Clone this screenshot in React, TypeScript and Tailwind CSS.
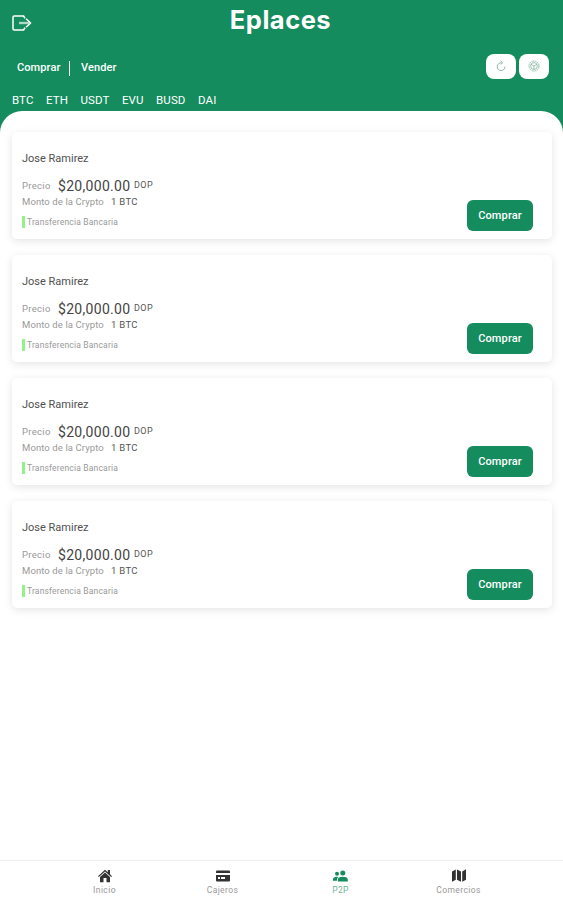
import React from 'react';

const coins = ['BTC', 'ETH', 'USDT', 'EVU', 'BUSD', 'DAI'];

const offers = [1, 2, 3, 4].map((id) => ({
  id,
  name: 'Jose Ramirez',
  price: '$20,000.00',
  currency: 'DOP',
  amount: '1 BTC',
  method: 'Transferencia Bancaria',
}));

function ExitIcon() {
  return (
    <svg width="20" height="16" viewBox="0 0 20 16" fill="none" stroke="currentColor" strokeWidth="1.5" strokeLinejoin="round">
      <path d="M13 3.4L11.6 1H2.2Q1 1 1 2.2V13.8Q1 15 2.2 15H11.6L13 12.6" />
      <path d="M7 8H17" strokeWidth="2.4" strokeOpacity="0.65" />
      <path d="M14 3.8L18.6 8L14 12.2" />
    </svg>
  );
}

function RefreshIcon() {
  return (
    <svg width="12" height="12" viewBox="0 0 12 12" fill="none" stroke="currentColor" strokeWidth="0.8">
      <path d="M6.5 2.8A3.9 3.9 0 1 0 10 6.6" />
      <path d="M5.6 0.8L7.6 2.7L5.8 4.5" />
    </svg>
  );
}

function FilterIcon() {
  return (
    <svg width="12" height="12" viewBox="0 0 12 12" fill="none" stroke="currentColor" strokeWidth="0.7">
      <circle cx="6" cy="6" r="5" strokeDasharray="2.1 0.5" />
      <circle cx="6" cy="6" r="3.4" />
      <path d="M3.2 4.4L6 6L8.8 4.4M6 6V9.2" />
    </svg>
  );
}

function HomeIcon() {
  return (
    <svg width="14" height="14" viewBox="0 0 14 14" fill="currentColor">
      <path d="M0 7.2L7 0.8L9.8 3.3V1H12V5.3L14 7.2L13.2 8L7 2.5L0.8 8Z" />
      <path d="M2 8L7 3.6L12 8V13.3H8.5V9H5.5V13.3H2Z" />
    </svg>
  );
}

function CardIcon() {
  return (
    <svg width="14" height="12" viewBox="0 0 14 12" fill="currentColor">
      <path d="M0 1.5Q0 .5 1 .5H13Q14 .5 14 1.5V3H0Z" />
      <path fillRule="evenodd" d="M0 5H14V10.5Q14 11.5 13 11.5H1Q0 11.5 0 10.5ZM2 7V9H4V7ZM5 7V9H9V7Z" />
    </svg>
  );
}

function PeopleIcon() {
  return (
    <svg width="15" height="12" viewBox="0 0 15 12" fill="currentColor">
      <circle cx="4" cy="3.7" r="2" />
      <circle cx="9.8" cy="3" r="2.5" />
      <path d="M0 10.8V9.3Q0 6.8 4 6.8Q4.8 6.8 5.4 7Q4 8 4 9.6V10.8Z" />
      <path d="M4.8 11.5V9.8Q4.8 6.8 9.8 6.8Q14.8 6.8 14.8 9.8V11.5Z" />
    </svg>
  );
}

function MapIcon() {
  return (
    <svg width="14" height="13" viewBox="0 0 14 13" fill="currentColor">
      <path d="M0 2.6L3.8 0.5V10.8L0 12.8Z" />
      <path d="M5 0.5L9 2.4V12.8L5 10.8Z" />
      <path d="M10.2 2.4L14 0.3V10.8L10.2 12.8Z" />
    </svg>
  );
}

const tabs = [
  { label: 'Inicio', icon: <HomeIcon /> },
  { label: 'Cajeros', icon: <CardIcon /> },
  { label: 'P2P', icon: <PeopleIcon />, active: true },
  { label: 'Comercios', icon: <MapIcon /> },
];

function OfferCard({ offer }: { offer: (typeof offers)[number] }) {
  return (
    <article className="flex h-[107px] items-end justify-between rounded-[5px] bg-white pl-[10px] pr-[19px] shadow-[0_2px_8px_rgba(0,0,0,0.11)]">
      <div className="h-full pt-[18px] text-[#999]">
        <h2 className="h-[18px] text-[11px] leading-[18px] text-[#505050]">{offer.name}</h2>
        <div className="mt-[9px] flex h-[18px] items-center whitespace-nowrap">
          <span className="w-[36px] text-[9.5px] tracking-[0.3px]">Precio</span>
          <span className="w-[76px] text-[14px] tracking-[0.3px] text-[#444]">{offer.price}</span>
          <span className="text-[9px] tracking-[0.4px] text-[#555]">{offer.currency}</span>
        </div>
        <div className="flex h-[15px] items-center whitespace-nowrap">
          <span className="w-[89px] text-[9.5px] tracking-[0.1px]">Monto de la Crypto</span>
          <span className="text-[9.5px] tracking-[0.3px] text-[#555]">{offer.amount}</span>
        </div>
        <div className="mt-[6px] flex h-[12px] items-center whitespace-nowrap">
          <span className="h-[12px] w-[3px] bg-[#91f487]" />
          <span className="ml-[2px] text-[8.5px] tracking-[0.18px]">{offer.method}</span>
        </div>
      </div>
      <button className="mb-[8px] h-[31px] w-[66px] rounded-[6px] bg-[#148c5e] pt-px text-[11px] font-medium tracking-[0.15px] text-white">
        Comprar
      </button>
    </article>
  );
}

export default function App() {
  return (
    <div className="flex h-[900px] w-[563px] flex-col overflow-hidden bg-[#148c5e] font-['Roboto',sans-serif]">
      <header className="h-[111px] shrink-0 text-white">
        <div className="grid h-[44px] grid-cols-3 items-center pl-[12px] pr-[14px]">
          <button aria-label="Salir" className="w-fit">
            <ExitIcon />
          </button>
          <h1 className="h-[46px] text-center font-['Inter',sans-serif] text-[25.5px] font-bold leading-[40px] tracking-[0.5px]">
            Eplaces
          </h1>
        </div>
        <div className="flex h-[44px] items-center justify-between pl-[17px] pr-[14px]">
          <div className="flex items-center pt-[5px] text-[11px] font-medium tracking-[0.1px]">
            <span className="w-[52px]">Comprar</span>
            <span className="mr-[11px] h-[15px] w-px bg-white" />
            <span>Vender</span>
          </div>
          <div className="flex gap-[3px] text-[#72a892]">
            <button aria-label="Actualizar" className="flex h-[25px] w-[30px] items-center justify-center rounded-[8px] bg-white">
              <RefreshIcon />
            </button>
            <button aria-label="Filtrar" className="flex h-[25px] w-[30px] items-center justify-center rounded-[8px] bg-white">
              <FilterIcon />
            </button>
          </div>
        </div>
        <nav className="flex h-[23px] items-center gap-[12.5px] pl-[12px] pt-[2px] text-[11.5px] tracking-[0.1px]">
          {coins.map((coin) => (
            <span key={coin}>{coin}</span>
          ))}
        </nav>
      </header>

      <main className="flex flex-1 flex-col gap-4 rounded-t-[22px] bg-white pl-[12px] pr-[11px] pt-[21px]">
        {offers.map((offer) => (
          <OfferCard key={offer.id} offer={offer} />
        ))}
      </main>

      <footer className="flex h-[40px] shrink-0 justify-center border-t border-[#f0f0f0] bg-white">
        {tabs.map(({ label, icon, active }) => (
          <div key={label} className={`flex w-[118px] flex-col items-center pt-[6px] ${active ? 'text-[#148c5e]' : 'text-[#333]'}`}>
            <div className="flex h-[17px] items-center">{icon}</div>
            <span className={`text-[8.5px] leading-[13px] tracking-[0.4px] ${active ? 'text-[#6db597]' : 'text-[#999]'}`}>{label}</span>
          </div>
        ))}
      </footer>
    </div>
  );
}
